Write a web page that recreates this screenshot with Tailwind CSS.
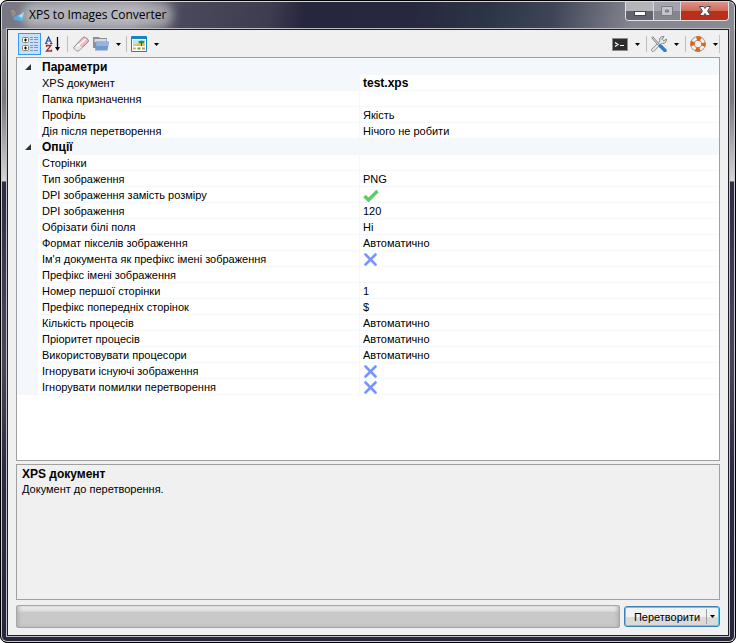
<!DOCTYPE html>
<html lang="uk">
<head>
  <meta charset="UTF-8" />
  <meta name="viewport" content="width=device-width, initial-scale=1.0" />
  <title>XPS to Images Converter</title>
  <script src="https://cdn.jsdelivr.net/npm/@tailwindcss/browser@4"></script>
  <style>
    body { font-family: "Liberation Sans", Arial, sans-serif; }
    .titlebar {
      background: linear-gradient(100deg, #777783 0, #85858f 130px, #4a495b 180px, #3e3d50 265px, #26263d 300px, #27273d 55%, #2b3546 66%, #3d4556 75%, #85858f 86%, #8b8b94 100%);
    }
    .side { background: linear-gradient(#8a8a93 0, #77777f 70px, #d8d4d8 152px, #2c2c42 153px, #45445a 300px, #4a4358 340px, #2b2b42 440px, #26263c 100%); }
  </style>
</head>
<body class="bg-white text-black text-[11px] leading-[16px]">

  <!-- Window frame -->
  <div class="min-h-screen flex flex-col rounded-[7px] border border-black overflow-hidden bg-[#27273d]">

    <!-- Title bar -->
    <header class="titlebar h-7 shrink-0 flex items-start justify-between pl-2 pr-[5px] border-t border-x border-[#d5d5da] rounded-t-[6px]">
      <div class="flex items-center gap-[3px] h-[26px]">
        <svg class="w-4 h-4" viewBox="0 0 16 16">
          <path d="M1 3l3 0 2 3-2 4-2-1z" fill="#8d8f95" />
          <path d="M1 3l3 0-1 3z" fill="#c98a4c" />
          <path d="M3 11l4-3 2 1 5-4-1 9-9-1z" fill="#4ba9dc" />
          <path d="M8 9l6-4-2 6z" fill="#9ad6f4" />
        </svg>
        <h1 class="text-[12px] leading-[12px] rounded-full bg-white/40 shadow-[0_0_9px_7px_rgba(255,255,255,0.4)]" style="font-family: 'Open Sans', sans-serif">XPS to Images Converter</h1>
      </div>
      <div class="flex h-[19px] rounded-b-[4px] border border-t-0 border-[#e0e0e4] overflow-hidden divide-x divide-[#dcdce0]">
        <button aria-label="Minimize" class="w-7 flex items-center justify-center bg-linear-to-b from-[#b4b4bb] from-50% to-[#64646e] to-50%">
          <svg class="w-3 h-3" viewBox="0 0 12 12"><rect x="0.5" y="6.500" width="11" height="4" fill="#fff" stroke="#44444f" /></svg>
        </button>
        <button aria-label="Maximize" class="w-[27px] flex items-center justify-center bg-linear-to-b from-[#a4a4ac] from-50% to-[#85858e] to-50%">
          <svg class="w-3 h-3" viewBox="0 0 12 12"><path d="M.5 1.500h11v9H.5z M4.500 5h3v2h-3z" fill="#c3c3c8" fill-rule="evenodd" stroke="#7b7b84" /></svg>
        </button>
        <button aria-label="Close" class="w-[47px] flex items-center justify-center bg-linear-to-b from-[#dc9488] from-0% via-[#cf6a58] via-48% to-[#b8301a] to-52%">
          <svg class="w-3 h-3" viewBox="0 0 12 12"><path d="M.5 1.500h4L6 3.500l1.500-2h4L8.500 6l3 4.500h-4L6 8.500l-1.500 2h-4L3.500 6z" fill="#fff" stroke="#4b4b57" /></svg>
        </button>
      </div>
    </header>

    <div class="side grow flex flex-col border-x border-b border-[#c8c8ce] rounded-b-[6px] px-1 pb-1">
      <main class="grow flex flex-col border border-[#bfbfc6] -mt-px">
       <div class="grow flex flex-col border border-[#1c1c22] bg-[#f0f0f0] px-2 pb-[7px]">

        <!-- Toolbar -->
        <nav class="h-[28px] flex items-center justify-between pl-[2px]" aria-label="Toolbar">
          <div class="flex items-center">
            <button aria-label="Categorized" class="w-[23px] h-[22px] flex items-center justify-center border border-[#3399ff] bg-[#c4e0fc]">
              <svg class="w-[18px] h-4" viewBox="0 0 18 16" fill="none">
                <g stroke="#8c8468" fill="#fff"><rect x="1.500" y="1.500" width="6" height="5" rx="1" /><rect x="1.500" y="9.500" width="6" height="5" rx="1" /></g>
                <path d="M3 4h3M4.500 2.500v3M3 12h3M4.500 10.500v3" stroke="#000" />
                <path d="M9 1.500h3M9 3.500h3M9 6.500h3M9 9.500h3M9 11.500h3M9 14.500h3" stroke="#7f96c0" />
                <path d="M13 1.500h4M13 3.500h4M13 6.500h4M13 9.500h4M13 11.500h4M13 14.500h4" stroke="#8b93a8" />
              </svg>
            </button>
            <button aria-label="Alphabetical" class="w-[23px] h-[22px] flex items-center justify-center">
              <svg class="w-4 h-4" viewBox="0 0 16 16" fill="none">
                <path d="M1 7L3.500 1l3 6M2 5h4M0 7.500h2.500M5 7.500h2.500" stroke="#2c4f9e" stroke-width="1.200" />
                <path d="M1.500 11V9.500h4.500L1.500 15h5V13.500" stroke="#9c2f2f" stroke-width="1.300" />
                <path d="M12.500 1v12" stroke="#000" stroke-width="1.300" /><path d="M10 11h5l-2.500 4z" fill="#000" />
              </svg>
            </button>
            <span class="w-px h-4 mx-[3px] bg-[#bdbdbd]"></span>
            <button aria-label="Clear" class="w-5 h-[22px] flex items-center justify-center">
              <svg class="w-4 h-4" viewBox="0 0 16 16">
                <path d="M1 11L10 1.500Q11 .500 12.500 1.500L15 3.500Q16 5 15 6L6 14.500Q4.500 15.500 3 14.500L1.500 13Q.500 12 1 11z" fill="#f5b9c4" stroke="#8f8589" />
                <path d="M1.500 11L5 7.500 9 11.500 6 14Q4.500 15 3 14L2 13Q1 12 1.500 11z" fill="#e6e6e8" />
                <path d="M4 10.500L12.500 3" stroke="#fff" stroke-width="1.500" />
              </svg>
            </button>
            <button aria-label="Open folder" class="w-8 h-[22px] flex items-center justify-between pl-[2px] pr-[2px]">
              <svg class="w-4 h-4" viewBox="0 0 16 16">
                <path d="M0 1h6l1 1h7v10H0z" fill="#8c8f94" /><path d="M1.500 3h12v3h-12z" fill="#d9dbde" />
                <path d="M3 5.500H16L14.500 14.500H2z" fill="#7399cd" /><path d="M3.500 6h12l-.5 4h-12z" fill="#93b4df" />
              </svg>
              <svg class="w-[5px] h-[3px]" viewBox="0 0 5 3"><path d="M0 0h5L2.500 3z" /></svg>
            </button>
            <span class="w-px h-4 mx-[3px] bg-[#bdbdbd]"></span>
            <button aria-label="Image preview" class="w-8 h-[22px] flex items-center justify-between pl-px pr-[3px]">
              <svg class="w-4 h-4" viewBox="0 0 16 16">
                <rect width="16" height="16" rx="1" fill="#1686bd" /><rect x="1" y="3" width="14" height="12" fill="#fff" />
                <rect x="2" y="4" width="12" height="6" fill="#bfe6f7" /><path d="M2 9q6-3 12-1v2H2z" fill="#e6bd51" />
                <ellipse cx="10.500" cy="6" rx="3" ry="1.500" fill="#3f8a3a" /><path d="M10.500 7v3" stroke="#6b4a22" />
                <path d="M2 11.500h3v2H2z" fill="#e2b43e" /><path d="M6.500 11.500h3v2h-3z" fill="#57a548" /><path d="M11 11.500h3v2h-3z" fill="#d78b3d" />
              </svg>
              <svg class="w-[5px] h-[3px]" viewBox="0 0 5 3"><path d="M0 0h5L2.500 3z" /></svg>
            </button>
          </div>
          <div class="flex items-center">
            <button aria-label="Console" class="w-8 h-[22px] flex items-center justify-between pl-px pr-[3px]">
              <svg class="w-4 h-4" viewBox="0 0 16 16" fill="none">
                <rect x="0.500" y="2.500" width="15" height="12" fill="#2d2d2d" stroke="#8b8b8b" /><path d="M3 6.500l3 2-3 2M8 9.500h4" stroke="#fff" stroke-width="1.200" />
              </svg>
              <svg class="w-[5px] h-[3px]" viewBox="0 0 5 3"><path d="M0 0h5L2.500 3z" /></svg>
            </button>
            <span class="w-px h-4 mx-[3px] bg-[#bdbdbd]"></span>
            <button aria-label="Tools" class="w-8 h-[22px] flex items-center justify-between pl-px pr-[3px]">
              <svg class="w-4 h-4" viewBox="0 0 16 16" fill="none">
                <path d="M2 14L11 5" stroke="#85888c" stroke-width="3.500" stroke-linecap="round" />
                <path d="M15.500 3l-3 2-1.500-1.500 2-3q-3.500-.500-4.500 2.500 0 3.500 3 4.500 4 0 4-4.500z" fill="#e6e6e8" stroke="#85888c" />
                <path d="M2 14L11 5" stroke="#eceded" stroke-width="2" stroke-linecap="round" />
                <path d="M1 1l8 9" stroke="#85888c" stroke-width="2.500" /><path d="M1.500 1.500l7 8" stroke="#e2e3e5" />
                <path d="M9.500 10l4.500 4.500" stroke="#2f7fce" stroke-width="3.500" stroke-linecap="round" />
              </svg>
              <svg class="w-[5px] h-[3px]" viewBox="0 0 5 3"><path d="M0 0h5L2.500 3z" /></svg>
            </button>
            <span class="w-px h-4 mx-[3px] bg-[#bdbdbd]"></span>
            <button aria-label="Help" class="w-[29px] h-[22px] flex items-center justify-between pl-px">
              <svg class="w-4 h-4" viewBox="0 0 16 16" fill="none">
                <circle cx="8" cy="8" r="5.500" stroke="#9b8f88" stroke-width="4.500" /><circle cx="8" cy="8" r="5.500" stroke="#f4f2f0" stroke-width="3" />
                <circle cx="8" cy="8" r="5.500" stroke="#e0641c" stroke-width="4.500" stroke-dasharray="4.320" stroke-dashoffset="2.160" />
              </svg>
              <svg class="w-[5px] h-[3px]" viewBox="0 0 5 3"><path d="M0 0h5L2.500 3z" /></svg>
            </button>
            <span class="w-px h-[18px] ml-px bg-[#c4c4c4]"></span>
          </div>
        </nav>

        <!-- Property grid -->
        <section class="grow border border-[#a0a0a0] bg-white -mt-px">
          <table class="w-full table-fixed border-separate border-spacing-0 border-t border-[#f4f7fc]">
            <colgroup><col class="w-[21px]" /><col class="w-[322px]" /><col /></colgroup>
            <tbody id="grid"></tbody>
          </table>
        </section>

        <!-- Description -->
        <section class="h-[136px] shrink-0 mt-[3px] px-[5px] pt-px border border-[#a0a0a0]">
          <h2 class="font-bold text-[12px] leading-[16px]">XPS документ</h2>
          <p class="leading-[14px]">Документ до перетворення.</p>
        </section>

        <!-- Progress and start button -->
        <footer class="flex items-center gap-1 mt-[5px]">
          <div role="progressbar" aria-valuenow="0" aria-label="Перетворення" class="grow h-[23px] rounded-[2px] border border-[#a5a5a5] shadow-[inset_3px_0_4px_-2px_#aaaaaa,inset_-3px_0_4px_-2px_#aaaaaa] bg-linear-to-b from-[#f4f4f4] via-[#dadada] via-25% to-[#c9c9c9] to-30%"></div>
          <div class="flex h-[21px] w-24 rounded-[3px] border border-[#3c7fb1] shadow-[inset_0_0_0_1px_#4fd0f5] bg-linear-to-b from-[#f2f2f2] from-50% to-[#dadada] to-50%">
            <button class="grow pl-[3px]">Перетворити</button>
            <button aria-label="Більше" class="w-[13px] my-[2px] pr-px flex items-center justify-center border-l border-[#a0a0a0]">
              <svg class="w-[5px] h-[3px]" viewBox="0 0 5 3"><path d="M0 0h5L2.500 3z" /></svg>
            </button>
          </div>
        </footer>
       </div>
      </main>
    </div>
  </div>

  <script>
    const grid = document.getElementById("grid");

    const groups = [
      {
        title: "Параметри",
        rows: [
          ["XPS документ", "test.xps", "selected"],
          ["Папка призначення", ""],
          ["Профіль", "Якість"],
          ["Дія після перетворення", "Нічого не робити"]
        ]
      },
      {
        title: "Опції",
        rows: [
          ["Сторінки", ""],
          ["Тип зображення", "PNG"],
          ["DPI зображення замість розміру", true],
          ["DPI зображення", "120"],
          ["Обрізати білі поля", "Ні"],
          ["Формат пікселів зображення", "Автоматично"],
          ["Ім'я документа як префікс імені зображення", false],
          ["Префікс імені зображення", ""],
          ["Номер першої сторінки", "1"],
          ["Префікс попередніх сторінок", "$"],
          ["Кількість процесів", "Автоматично"],
          ["Пріоритет процесів", "Автоматично"],
          ["Використовувати процесори", "Автоматично"],
          ["Ігнорувати існуючі зображення", false],
          ["Ігнорувати помилки перетворення", false]
        ]
      }
    ];

    function valueHTML(name, value) {
      if (typeof value !== "boolean") return value;
      const icon = value
        ? `<svg class="w-4 h-[13px]" viewBox="0 1 16 13"><path d="M1.500 8l4 4L14.500 3" fill="none" stroke="#5ccc66" stroke-width="3.500" /></svg>`
        : `<svg class="w-4 h-[13px]" viewBox="0 1 16 13"><path d="M2.500 2.500l10 10M12.500 2.500l-10 10" fill="none" stroke="#7697f8" stroke-width="2.600" stroke-linecap="round" /></svg>`;
      return `<label class="block"><input type="checkbox" class="sr-only" aria-label="${name}" ${value ? "checked" : ""}>${icon}</label>`;
    }

    groups.forEach(group => {
      grid.innerHTML += `
        <tr class="h-4 bg-[#f4f7fc]">
          <td class="p-0"><svg class="w-[6px] h-[6px] ml-2" viewBox="0 0 6 6"><path d="M6 0v6H0z" fill="#333" /></svg></td>
          <th colspan="2" class="p-0 pl-1 text-left font-bold text-[12px] leading-[16px]">${group.title}</th>
        </tr>`;
      group.rows.forEach(([name, value, state]) => {
        const selected = state === "selected";
        grid.innerHTML += `
          <tr class="h-4">
            <td class="p-0 bg-[#f4f7fc]"></td>
            <td class="p-0 pl-1 pt-[2px] leading-[13px] border-b border-r border-[#f4f7fc] ${selected ? "bg-[#f4f7fc]" : ""}">${name}</td>
            <td class="p-0 pl-[3px] pt-[2px] leading-[13px] border-b border-[#f4f7fc] ${selected ? "font-bold text-[12px]" : ""}">${valueHTML(name, value)}</td>
          </tr>`;
      });
    });
  </script>

</body>
</html>
